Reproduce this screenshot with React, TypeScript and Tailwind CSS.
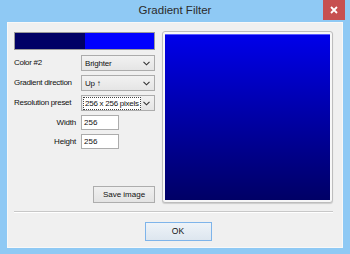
import React from "react";

const font = { fontFamily: '"Liberation Sans", Arial, sans-serif' };

function Chevron() {
  return (
    <svg width="7" height="5" viewBox="0 0 7 5" className="shrink-0">
      <path d="M0.5 0.8 L3.5 3.8 L6.5 0.8" fill="none" stroke="#333" strokeWidth="1.1" />
    </svg>
  );
}

function Combo({ value, focused }: { value: string; focused?: boolean }) {
  return (
    <div className="flex h-[16px] w-[74px] items-center justify-between overflow-hidden border border-[#acacac] bg-gradient-to-b from-[#f2f2f2] to-[#e5e5e5] pl-[1px] pr-[4px]">
      {focused ? (
        <span className="whitespace-nowrap border border-dotted border-[#444] bg-white px-[1px] text-[8px] leading-[11px] tracking-[-0.25px] text-[#111]">
          {value}
        </span>
      ) : (
        <span className="whitespace-nowrap pl-[2px] text-[8px] leading-[11px] tracking-[-0.2px] text-[#111]">{value}</span>
      )}
      <Chevron />
    </div>
  );
}

function ComboRow({ label, value, focused }: { label: string; value: string; focused?: boolean }) {
  return (
    <div className="flex items-center">
      <span className="w-[67px] whitespace-nowrap text-[8px] tracking-[-0.3px] text-[#111]">{label}</span>
      <Combo value={value} focused={focused} />
    </div>
  );
}

function NumberRow({ label, value }: { label: string; value: string }) {
  return (
    <div className="flex items-center">
      <span className="w-[63px] whitespace-nowrap pr-[1px] text-right text-[8px] tracking-[-0.2px] text-[#111]">{label}</span>
      <div className="ml-[4px] flex h-[15px] w-[38px] items-center border border-[#acacac] bg-white pl-[2px] text-[8px] text-[#111]">
        {value}
      </div>
    </div>
  );
}

export default function App() {
  return (
    <div className="flex h-[254px] w-[350px] flex-col bg-[#8fc9f4]" style={font}>
      <div className="relative flex h-[22px] shrink-0 items-center justify-center">
        <span className="text-[11.5px] text-[#2b2b2b]">Gradient Filter</span>
        <div className="absolute right-[5px] top-0 flex h-[20px] w-[22px] items-center justify-center bg-[#c75050]">
          <svg width="8" height="8" viewBox="0 0 8 8">
            <path d="M1 1 L7 7 M7 1 L1 7" stroke="white" strokeWidth="1.8" />
          </svg>
        </div>
      </div>
      <div className="mx-[7px] mb-[6px] flex flex-1 flex-col border border-[#f8f8f8] bg-[#f0f0f0] pl-[6px] pr-[9px] pt-[8px]">
        <div className="flex h-[172px]">
          <div className="flex w-[141px] flex-col">
            <div className="mt-[1px] flex h-[18px] border border-[#9a9a9a]">
              <div className="w-1/2 bg-[#000066]" />
              <div className="w-1/2 bg-[#0000ff]" />
            </div>
            <div className="mt-[5px] flex flex-col gap-[4px]">
              <ComboRow label="Color #2" value="Brighter" />
              <ComboRow label="Gradient direction" value="Up ↑" />
              <ComboRow label="Resolution preset" value="256 x 256 pixels" focused />
            </div>
            <div className="mt-[4px] flex flex-col gap-[4px]">
              <NumberRow label="Width" value="256" />
              <NumberRow label="Height" value="256" />
            </div>
            <div className="mt-auto flex justify-end">
              <button className="flex h-[17px] w-[62px] items-center justify-center border border-[#adadad] bg-gradient-to-b from-[#f0f0f0] to-[#e3e3e3] text-[8px] text-[#111]">
                Save image
              </button>
            </div>
          </div>
          <div className="ml-[7px] flex w-[171px] rounded-[3px] border border-[#bdbdbd] bg-[#f7f7f7] p-[2px] shadow-[0_1px_1px_rgba(0,0,0,0.15)]">
            <div className="flex-1 border-t border-[#5c5cff] bg-gradient-to-b from-[#0000ea] to-[#000066]" />
          </div>
        </div>
        <div className="mt-[8px] h-[2px] border-t border-b border-t-[#c8c8c8] border-b-white" />
        <div className="mt-[9px] flex justify-center pl-[9px]">
          <button className="flex h-[19px] w-[67px] items-center justify-center border border-[#7eb4ea] bg-gradient-to-b from-[#eef3f8] to-[#dde6ef] text-[8.5px] text-[#111]">
            OK
          </button>
        </div>
      </div>
    </div>
  );
}
